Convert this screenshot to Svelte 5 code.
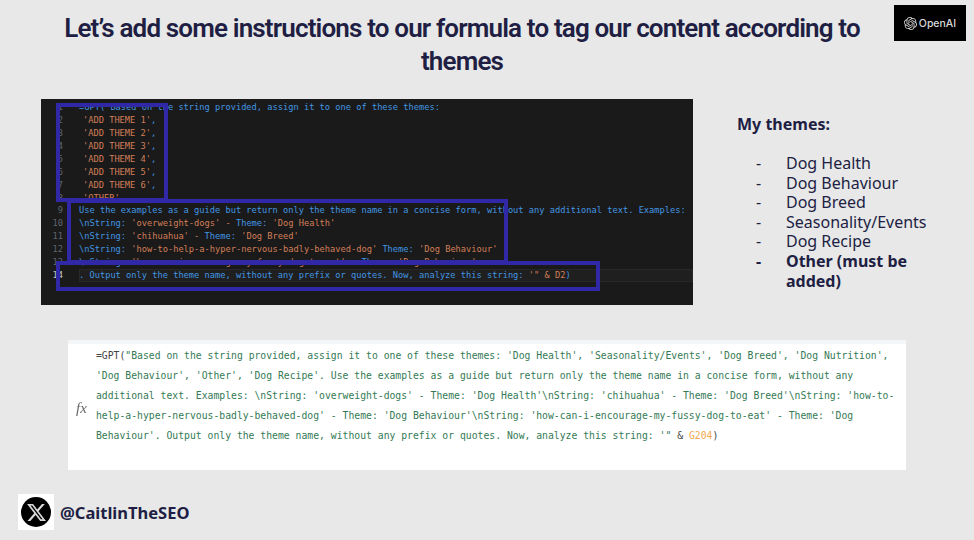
<script lang="ts">
  type Token = { t: string; c?: string };

  const s = 'str';
  const codeLines: Token[][] = [
    [{ t: '=GPT("Based on the string provided, assign it to one of these themes:' }],
    [{ t: "'ADD THEME 1'", c: s }, { t: ',' }],
    [{ t: "'ADD THEME 2'", c: s }, { t: ',' }],
    [{ t: "'ADD THEME 3'", c: s }, { t: ',' }],
    [{ t: "'ADD THEME 4'", c: s }, { t: ',' }],
    [{ t: "'ADD THEME 5'", c: s }, { t: ',' }],
    [{ t: "'ADD THEME 6'", c: s }, { t: ',' }],
    [{ t: "'OTHER'", c: s }, { t: '.' }],
    [{ t: 'Use the examples as a guide but return only the theme name in a concise form, without any additional text. Examples:' }],
    [{ t: '\\nString: ' }, { t: "'overweight-dogs' - ", c: s }, { t: 'Theme: ' }, { t: "'Dog Health'", c: s }],
    [{ t: '\\nString: ' }, { t: "'chihuahua' - ", c: s }, { t: 'Theme: ' }, { t: "'Dog Breed'", c: s }],
    [{ t: '\\nString: ' }, { t: "'how-to-help-a-hyper-nervous-badly-behaved-dog' ", c: s }, { t: 'Theme: ' }, { t: "'Dog Behaviour'", c: s }],
    [{ t: '\\nString: ' }, { t: "'how-can-i-encourage-my-fussy-dog-to-eat' - ", c: s }, { t: 'Theme: ' }, { t: "'Dog Behaviour'", c: s }],
    [{ t: '. Output only the theme name, without any prefix or quotes. Now, analyze this string: ' }, { t: '\'" & D2', c: s }, { t: ')' }],
  ];

  const themes = ['Dog Health', 'Dog Behaviour', 'Dog Breed', 'Seasonality/Events', 'Dog Recipe'];

  const formula = [
    `"Based on the string provided, assign it to one of these themes: 'Dog Health', 'Seasonality/Events', 'Dog Breed', 'Dog Nutrition',`,
    `'Dog Behaviour', 'Other', 'Dog Recipe'. Use the examples as a guide but return only the theme name in a concise form, without any`,
    `additional text. Examples: \\nString: 'overweight-dogs' - Theme: 'Dog Health'\\nString: 'chihuahua' - Theme: 'Dog Breed'\\nString: 'how-to-`,
    `help-a-hyper-nervous-badly-behaved-dog' - Theme: 'Dog Behaviour'\\nString: 'how-can-i-encourage-my-fussy-dog-to-eat' - Theme: 'Dog`,
  ];
</script>

<div class="slide">
  <header class="top">
    <h1>Let’s add some instructions to our formula to tag our content according to themes</h1>
    <div class="openai">
      <svg viewBox="0 0 24 24" width="13" height="13" fill="#d8d8d8">
        <path d="M22.282 9.821a5.985 5.985 0 0 0-.516-4.91 6.046 6.046 0 0 0-6.51-2.9A6.065 6.065 0 0 0 4.981 4.18a5.985 5.985 0 0 0-3.998 2.9 6.046 6.046 0 0 0 .743 7.097 5.98 5.98 0 0 0 .51 4.911 6.051 6.051 0 0 0 6.515 2.9A5.985 5.985 0 0 0 13.26 24a6.056 6.056 0 0 0 5.772-4.206 5.99 5.99 0 0 0 3.997-2.9 6.056 6.056 0 0 0-.747-7.073zM13.26 22.43a4.476 4.476 0 0 1-2.876-1.04l.141-.081 4.779-2.758a.795.795 0 0 0 .392-.681v-6.737l2.02 1.168a.071.071 0 0 1 .038.052v5.583a4.504 4.504 0 0 1-4.494 4.494zM3.6 18.304a4.47 4.47 0 0 1-.535-3.014l.142.085 4.783 2.759a.771.771 0 0 0 .78 0l5.843-3.369v2.332a.08.08 0 0 1-.033.062L9.74 19.95a4.5 4.5 0 0 1-6.14-1.646zM2.34 7.896a4.485 4.485 0 0 1 2.366-1.973V11.6a.766.766 0 0 0 .388.676l5.815 3.355-2.02 1.168a.076.076 0 0 1-.071 0l-4.83-2.786A4.504 4.504 0 0 1 2.34 7.872zm16.597 3.855l-5.833-3.387L15.119 7.2a.076.076 0 0 1 .071 0l4.83 2.791a4.494 4.494 0 0 1-.676 8.105v-5.678a.79.79 0 0 0-.407-.667zm2.01-3.023l-.141-.085-4.774-2.782a.776.776 0 0 0-.785 0L9.409 9.23V6.897a.066.066 0 0 1 .028-.061l4.83-2.787a4.5 4.5 0 0 1 6.68 4.66zm-12.64 4.135l-2.02-1.164a.08.08 0 0 1-.038-.057V6.075a4.5 4.5 0 0 1 7.375-3.453l-.142.08L8.704 5.46a.795.795 0 0 0-.393.681zm1.097-2.365l2.602-1.5 2.607 1.5v2.999l-2.597 1.5-2.607-1.5z" />
      </svg>
      <span>OpenAI</span>
    </div>
  </header>

  <section class="middle">
    <div class="editor">
      <div class="code">
        {#each codeLines as line, i}
          <div class="row" class:current={i === 13}>
            <span class="num">{i + 1}</span>
            <span class="src" class:indent={i > 0 && i < 8}>{#each line as tok}<span class={tok.c}>{tok.t}</span>{/each}</span>
          </div>
        {/each}
      </div>
      <div class="mark mark-a"></div>
      <div class="mark mark-b"></div>
      <div class="mark mark-c"></div>
    </div>

    <aside class="themes">
      <h2>My themes:</h2>
      <ul>
        {#each themes as theme}
          <li>{theme}</li>
        {/each}
        <li class="must">Other (must be added)</li>
      </ul>
    </aside>
  </section>

  <section class="formula">
    <span class="fx">fx</span>
    <div class="formula-text">
      <div class="fl"><span class="dark">=GPT(</span>{formula[0]}</div>
      {#each formula.slice(1) as line}
        <div class="fl">{line}</div>
      {/each}
      <div class="fl">Behaviour'. Output only the theme name, without any prefix or quotes. Now, analyze this string: '" <span class="dark">&amp;</span> <span class="ref">G204</span><span class="dark">)</span></div>
    </div>
  </section>

  <footer class="handle">
    <div class="x-badge">
      <div class="x-circle">
        <svg viewBox="0 0 24 24" width="21" height="21" fill="#d9d9d9">
          <path d="M18.244 2.25h3.308l-7.227 8.26 8.502 11.24H16.17l-5.214-6.817L4.99 21.75H1.68l7.73-8.835L1.254 2.25H8.08l4.713 6.231zm-1.161 17.52h1.833L7.084 4.126H5.117z" />
        </svg>
      </div>
    </div>
    <span>@CaitlinTheSEO</span>
  </footer>
</div>

<style>
  :global(body) {
    margin: 0;
    background: #e8e8e8;
  }

  .slide {
    box-sizing: border-box;
    width: 974px;
    height: 540px;
    overflow: hidden;
    background: #e8e8e8;
    color: #201e43;
    font-family: "Noto Sans", sans-serif;
    display: flex;
    flex-direction: column;
  }

  .top {
    display: flex;
    align-items: flex-start;
    height: 99px;
    padding: 5px 8px 0 0;
    box-sizing: border-box;
  }

  h1 {
    flex: 1;
    margin: 7px 0 0 0;
    padding: 0 0 0 30px;
    font-family: Roboto, sans-serif;
    font-size: 26px;
    line-height: 33px;
    font-weight: 600;
    letter-spacing: -0.84px;
    text-align: center;
  }

  .openai {
    width: 72px;
    height: 36px;
    flex: none;
    background: #000;
    color: #d8d8d8;
    display: flex;
    align-items: center;
    justify-content: center;
    gap: 2px;
    font-size: 10.5px;
    font-weight: 500;
    font-family: Inter, sans-serif;
  }

  .middle {
    display: flex;
    height: 241px;
    padding-left: 41px;
  }

  .editor {
    position: relative;
    width: 652px;
    height: 206px;
    flex: none;
    background: #1a1a1a;
    overflow: hidden;
  }

  .code {
    padding-top: 2px;
    font-family: "DejaVu Sans Mono", monospace;
    font-size: 8.7px;
    line-height: 13px;
    color: #4296e2;
  }

  .row {
    display: flex;
    height: 13px;
    white-space: pre;
  }

  .row:nth-child(9) {
    margin-top: -1px;
  }

  .num {
    width: 22px;
    flex: none;
    text-align: right;
    color: #5f6670;
  }

  .current .num {
    color: #c4c8ce;
  }

  .src {
    margin-left: 16px;
  }

  .current .src {
    flex: 1;
    background: #1f1f1f;
    box-shadow: inset 0 0 0 1px #282828;
  }

  .src.indent {
    margin-left: 20px;
  }

  .str {
    color: #d27f58;
  }

  .mark {
    position: absolute;
    box-sizing: border-box;
    border: 4px solid #3128a8;
  }

  .mark-a {
    left: 15px;
    top: 4px;
    width: 112px;
    height: 99px;
  }

  .mark-b {
    left: 26px;
    top: 100px;
    width: 441px;
    height: 65px;
  }

  .mark-c {
    left: 15px;
    top: 162px;
    width: 544px;
    height: 30px;
  }

  .themes {
    margin-left: 44px;
    padding-top: 15px;
    font-size: 16px;
    line-height: 19.6px;
  }

  h2 {
    margin: 0 0 20px;
    font-size: 16px;
    line-height: 20px;
    font-weight: 700;
  }

  ul {
    list-style: none;
    margin: 0;
    padding: 0 0 0 49px;
    width: 150px;
  }

  li {
    position: relative;
  }

  li::before {
    content: "-";
    position: absolute;
    left: -30px;
  }

  .must {
    font-weight: 700;
  }

  .formula {
    box-sizing: border-box;
    width: 838px;
    height: 130px;
    margin-left: 68px;
    background: #fff;
    border-top: 4px solid #f5f6f7;
    display: flex;
    position: relative;
    padding: 2px 0 0 28px;
  }

  .fx {
    position: absolute;
    left: 8px;
    top: 56px;
    font-family: "Liberation Serif", serif;
    font-style: italic;
    font-size: 15px;
    color: #666;
    filter: blur(0.3px);
  }

  .formula-text {
    font-family: "DejaVu Sans Mono", monospace;
    font-size: 9.75px;
    line-height: 20px;
    color: #357a55;
  }

  .fl {
    white-space: pre;
    height: 20px;
  }

  .dark {
    color: #444;
  }

  .ref {
    color: #f2a94e;
  }

  .handle {
    display: flex;
    align-items: center;
    gap: 6px;
    margin: 24px 0 0 18px;
    font-size: 16.5px;
    font-weight: 700;
  }

  .x-badge {
    width: 36px;
    height: 36px;
    background: #fff;
    display: flex;
    align-items: center;
    justify-content: center;
  }

  .x-circle {
    width: 30px;
    height: 30px;
    border-radius: 50%;
    background: #000;
    display: flex;
    align-items: center;
    justify-content: center;
  }
</style>
